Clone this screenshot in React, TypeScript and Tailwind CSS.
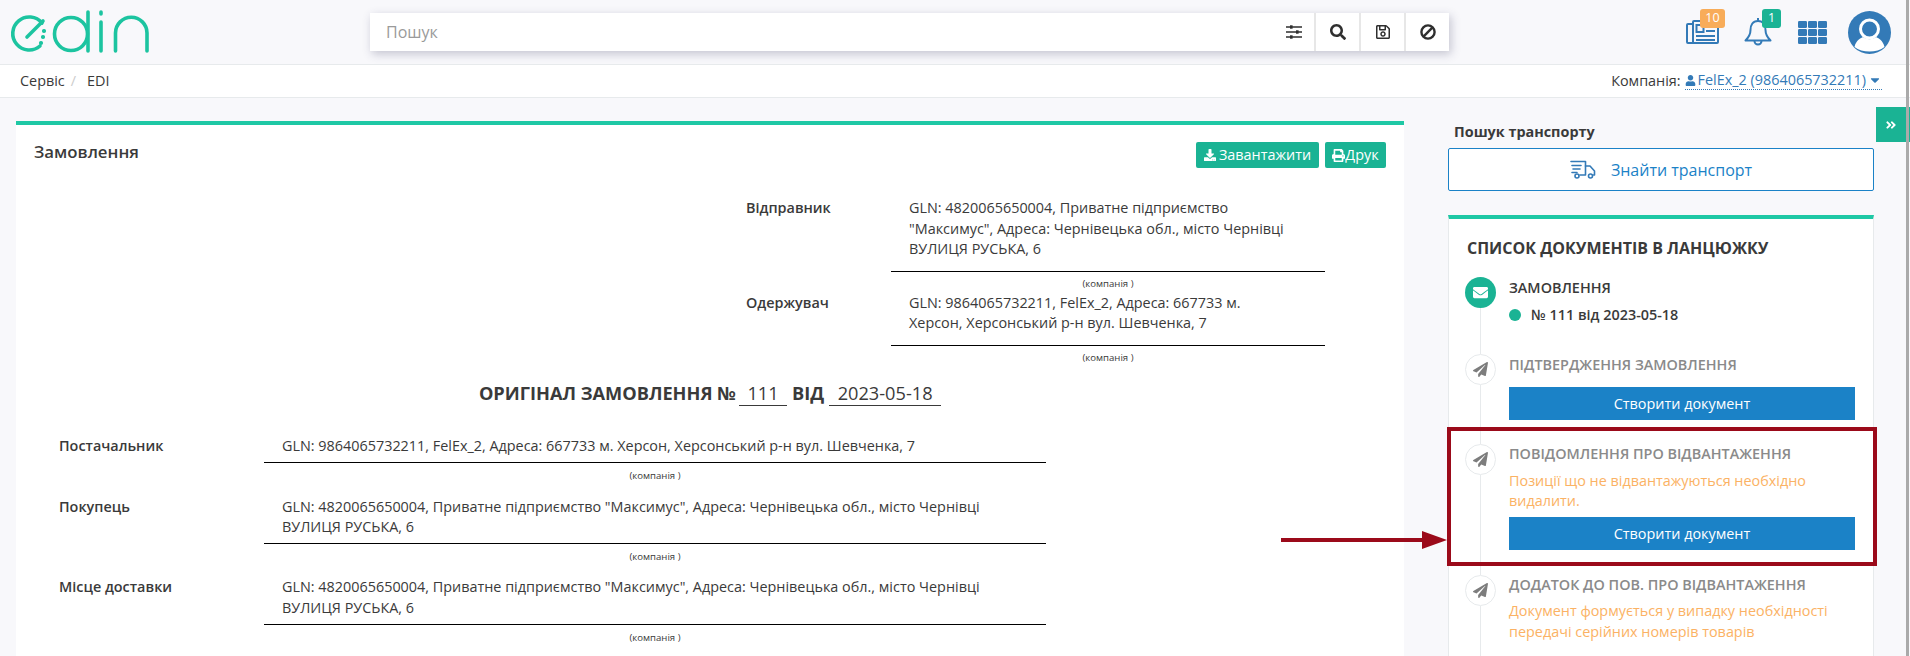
import type { ReactNode } from 'react';
import {
  FaAngleDoubleRight,
  FaCaretDown,
  FaDownload,
  FaEnvelope,
  FaPaperPlane,
  FaPrint,
  FaRegSave,
  FaSearch,
  FaUser,
} from 'react-icons/fa';

function Logo() {
  return (
    <svg width="150" height="56" viewBox="0 0 150 56" fill="none" stroke="#1cc4a0" strokeWidth="3.6" strokeLinecap="round">
      <path d="M42 23 A16.5 16.5 0 1 0 40 46" />
      <path d="M27 37 L43 21" />
      <circle cx="44" cy="31" r="1.4" fill="#1cc4a0" strokeWidth="1.4" />
      <circle cx="43" cy="37" r="1.4" fill="#1cc4a0" strokeWidth="1.4" />
      <circle cx="41" cy="43" r="1.4" fill="#1cc4a0" strokeWidth="1.4" />
      <circle cx="71" cy="34" r="16.5" />
      <path d="M88 12 V51" />
      <path d="M101 12 V14 M101 22 V51" />
      <path d="M115.5 51 V33 A15.75 15.75 0 0 1 147 33 V51" />
    </svg>
  );
}

function Avatar() {
  return (
    <svg width="43" height="43" viewBox="0 0 43 43">
      <circle cx="21.5" cy="21.5" r="21.5" fill="#337ab7" />
      <path d="M6.5 36 C8 29 13 27 15 26 C19 29 24 29 28 26 C30 27 35 29 36.5 36 C29 42 14 42 6.5 36 Z" fill="#fff" />
      <circle cx="21.5" cy="18" r="9" fill="#337ab7" stroke="#fff" strokeWidth="3" />
    </svg>
  );
}

function NewsIcon() {
  return (
    <svg width="33" height="24" viewBox="0 0 33 24" fill="none" stroke="#337ab7" strokeWidth="2">
      <path d="M7 4 H2 Q1 4 1 5 V22 Q1 23 2 23 H31 Q32 23 32 22 V2 Q32 1 31 1 H8 Q7 1 7 2 V23" />
      <rect x="10.5" y="5" width="7" height="7" />
      <path d="M20 7 H29 M20 11 H29 M10 16 H29 M10 20 H29" />
    </svg>
  );
}

function BellIcon() {
  return (
    <svg width="28" height="29" viewBox="0 0 28 29" fill="none" stroke="#337ab7" strokeWidth="2" strokeLinejoin="round">
      <path d="M14 4 C8.5 4 6.5 8.5 6.5 13 C6.5 18 4.5 20.5 1.5 23.5 H26.5 C23.5 20.5 21.5 18 21.5 13 C21.5 8.5 19.5 4 14 4 Z" />
      <path d="M14 1 V4" />
      <path d="M10.5 24 A3.5 3.5 0 0 0 17.5 24" />
    </svg>
  );
}

function GridIcon() {
  const cols = [0, 10, 20];
  const rows = [0, 8, 16];
  return (
    <svg width="29" height="23" viewBox="0 0 29 23" fill="#337ab7">
      {rows.map((y) => cols.map((x) => <rect key={`${x}-${y}`} x={x} y={y} width="9" height="7" rx="1.2" />))}
    </svg>
  );
}

function SlidersIcon() {
  return (
    <svg width="16" height="14" viewBox="0 0 16 14" fill="none" stroke="#2f2f2f" strokeWidth="1.3">
      <path d="M0 2 H16 M0 7 H16 M0 12 H16" />
      <rect x="4" y="0.3" width="2.6" height="3.4" fill="#2f2f2f" strokeWidth="0" />
      <rect x="10" y="5.3" width="2.6" height="3.4" fill="#2f2f2f" strokeWidth="0" />
      <rect x="4" y="10.3" width="2.6" height="3.4" fill="#2f2f2f" strokeWidth="0" />
    </svg>
  );
}

function BanIcon() {
  return (
    <svg width="16" height="16" viewBox="0 0 16 16" fill="none" stroke="#2f2f2f" strokeWidth="2.4">
      <circle cx="8" cy="8" r="6.6" />
      <path d="M3.4 12.6 L12.6 3.4" />
    </svg>
  );
}

function TruckIcon() {
  return (
    <svg width="26" height="19" viewBox="0 0 26 19" fill="none" stroke="#337ab7" strokeWidth="1.6" strokeLinecap="round" strokeLinejoin="round">
      <path d="M1 1.5 H15.5 V15 H10" />
      <path d="M15.5 6 H20 L24.5 11 V15 H23.5" />
      <path d="M2 5.5 H11 M3 9 H10 M2 12.5 H7" />
      <circle cx="7" cy="16" r="2" />
      <circle cx="20.5" cy="16" r="2" />
    </svg>
  );
}

function SearchButton({ children }: { children: ReactNode }) {
  return (
    <button className="flex h-full w-[45px] items-center justify-center border-l-2 border-[#e7e7e7] text-[16px] text-[#2f2f2f]">
      {children}
    </button>
  );
}

function Header() {
  return (
    <header className="flex h-[65px] items-start border-b border-[#e7eaec] bg-[#f8f8fb]">
      <div className="w-[370px]">
        <Logo />
      </div>
      <div className="mt-[13px] flex h-[38px] w-[1079px] items-center bg-white shadow-[2px_3px_9px_rgba(60,60,100,0.28)]">
        <span className="ml-[16px] flex-1 text-[16px] text-[#9a9a9a]">Пошук</span>
        <div className="flex h-full w-[40px] items-center justify-center">
          <SlidersIcon />
        </div>
        <SearchButton><FaSearch /></SearchButton>
        <SearchButton><FaRegSave /></SearchButton>
        <SearchButton><BanIcon /></SearchButton>
      </div>
      <div className="relative ml-[237px] mt-[20px] h-[24px] w-[42px]">
        <NewsIcon />
        <span className="absolute left-[14px] top-[-11px] flex h-[19px] w-[25px] items-center justify-center rounded-[3px] bg-[#f8ac59] text-[12.5px] text-white">10</span>
      </div>
      <div className="relative ml-[16px] mt-[17px]">
        <BellIcon />
        <span className="absolute left-[18px] top-[-8px] flex h-[19px] w-[19px] items-center justify-center rounded-[3px] bg-[#1ab394] text-[12.5px] text-white">1</span>
      </div>
      <div className="ml-[26px] mt-[21px]">
        <GridIcon />
      </div>
      <div className="ml-[21px] mt-[11px]">
        <Avatar />
      </div>
    </header>
  );
}

function Breadcrumbs() {
  return (
    <div className="flex h-[33px] items-center justify-between border-b border-[#e7eaec] bg-white pl-[20px] pr-[28px] text-[14.4px] text-[#3a3a3a]">
      <div className="flex items-center">
        <span>Сервіс</span>
        <span className="ml-[6px] text-[#ccc]">/</span>
        <span className="ml-[11px]">EDI</span>
      </div>
      <div className="flex items-center">
        <span>Компанія:</span>
        <span className="ml-[4px] flex items-center border-b border-dotted border-[#337ab7] leading-[18px] text-[#337ab7]">
          <FaUser className="mr-[2px] text-[11px]" />
          FelEx_2 (9864065732211)
          <FaCaretDown className="ml-[2px] text-[14px]" />
        </span>
      </div>
    </div>
  );
}

interface FieldProps {
  label: string;
  value: ReactNode;
  rowClass: string;
  labelClass: string;
  colClass: string;
  padClass: string;
  captionClass: string;
}

function Field({ label, value, rowClass, labelClass, colClass, padClass, captionClass }: FieldProps) {
  return (
    <div className={`flex text-[14.4px] leading-[20.5px] text-[#3a3a3a] ${rowClass}`}>
      <div className={`shrink-0 font-semibold ${labelClass}`}>{label}</div>
      <div className={colClass}>
        <div className={`border-b border-black pl-[18px] ${padClass}`}>{value}</div>
        <div className={`text-center text-[9.6px] leading-[12px] ${captionClass}`}>(компанія )</div>
      </div>
    </div>
  );
}

function OrderCard() {
  const topField = {
    rowClass: 'ml-[730px]',
    labelClass: 'w-[145px]',
    colClass: 'w-[434px]',
    padClass: 'pb-[11px]',
    captionClass: 'h-[21px] pt-[6px]',
  };
  const bottomField = {
    rowClass: 'ml-[43px]',
    labelClass: 'w-[205px]',
    colClass: 'w-[782px]',
    padClass: 'pb-[5.5px]',
    captionClass: 'h-[34px] pt-[7px]',
  };
  return (
    <section className="h-[535px] w-[1388px] shrink-0 border-t-4 border-[#1fc8a5] bg-white">
      <div className="flex items-start justify-between px-[18px] pt-[17px]">
        <h2 className="text-[16.8px] font-semibold leading-[20px] text-[#3a3a3a]">Замовлення</h2>
        <div className="flex gap-[6px]">
          <button className="flex h-[26px] w-[123px] items-center justify-center gap-[3px] rounded-[2px] bg-[#1ab394] text-[14.4px] text-white">
            <FaDownload className="text-[12px]" />
            Завантажити
          </button>
          <button className="flex h-[26px] w-[61px] items-center justify-center rounded-[2px] bg-[#1ab394] text-[14.4px] text-white">
            <FaPrint className="text-[13px]" />
            Друк
          </button>
        </div>
      </div>

      <div className="mt-[30px]">
        <Field
          {...topField}
          label="Відправник"
          value={<>GLN: 4820065650004, Приватне підприємство<br />"Максимус", Адреса: Чернівецька обл., місто Чернівці<br />ВУЛИЦЯ РУСЬКА, 6</>}
        />
        <Field
          {...topField}
          label="Одержувач"
          value={<>GLN: 9864065732211, FelEx_2, Адреса: 667733 м.<br />Херсон, Херсонський р-н вул. Шевченка, 7</>}
        />
      </div>

      <div className="mt-[14px] flex justify-center text-[18.2px] leading-[24px] text-[#3a3a3a]">
        <span className="font-bold">ОРИГІНАЛ ЗАМОВЛЕННЯ №</span>
        <span className="ml-[3px] w-[48px] border-b border-[#3a3a3a] text-center">111</span>
        <span className="ml-[5px] font-bold">ВІД</span>
        <span className="ml-[5px] w-[112px] border-b border-[#3a3a3a] text-center">2023-05-18</span>
      </div>

      <div className="mt-[30px]">
        <Field
          {...bottomField}
          label="Постачальник"
          value="GLN: 9864065732211, FelEx_2, Адреса: 667733 м. Херсон, Херсонський р-н вул. Шевченка, 7"
        />
        <Field
          {...bottomField}
          captionClass="h-[33px] pt-[7px]"
          label="Покупець"
          value={<>GLN: 4820065650004, Приватне підприємство "Максимус", Адреса: Чернівецька обл., місто Чернівці<br />ВУЛИЦЯ РУСЬКА, 6</>}
        />
        <Field
          {...bottomField}
          label="Місце доставки"
          value={<>GLN: 4820065650004, Приватне підприємство "Максимус", Адреса: Чернівецька обл., місто Чернівці<br />ВУЛИЦЯ РУСЬКА, 6</>}
        />
      </div>
    </section>
  );
}

function CreateButton({ className }: { className: string }) {
  return (
    <button className={`block h-[33px] w-[346px] bg-[#1b82c7] text-[14.4px] text-white ${className}`}>Створити документ</button>
  );
}

interface ChainItemProps {
  title: string;
  active?: boolean;
  className: string;
  titleClass: string;
  children: ReactNode;
}

function ChainItem({ title, active, className, titleClass, children }: ChainItemProps) {
  return (
    <div className={`flex ${className}`}>
      <div className="flex w-[31px] shrink-0 flex-col items-center">
        {active ? (
          <div className="flex h-[31px] w-[31px] shrink-0 items-center justify-center rounded-full bg-[#1ab394] text-[15px] text-white">
            <FaEnvelope />
          </div>
        ) : (
          <div className="flex h-[31px] w-[31px] shrink-0 items-center justify-center rounded-full border border-[#e7eaec] bg-white text-[15px] text-[#7d7d7d]">
            <FaPaperPlane />
          </div>
        )}
        <div className="w-px flex-1 bg-[#e7eaec]" />
      </div>
      <div className="ml-[13px] w-[346px]">
        <div className={`text-[14.4px] font-semibold leading-[20px] ${titleClass} ${active ? 'text-[#3a3a3a]' : 'text-[#8a8a8a]'}`}>{title}</div>
        {children}
      </div>
    </div>
  );
}

function SidePanel() {
  return (
    <aside className="ml-[44px] w-[426px] shrink-0">
      <h3 className="ml-[6px] pt-px text-[14.4px] font-bold leading-[20px] text-[#3a3a3a]">Пошук транспорту</h3>
      <button className="mt-[6px] flex h-[43px] w-full items-center justify-center gap-[15px] rounded-[2px] border border-[#1b82c7] bg-white text-[16px] text-[#1b82c7]">
        <TruckIcon />
        Знайти транспорт
      </button>

      <div className="mt-[24px] h-[460px] border-x border-t-4 border-x-[#e7eaec] border-t-[#1fc8a5] bg-white pl-[16px] pt-[18px]">
        <h3 className="ml-[2px] text-[16px] font-bold leading-[22px] text-[#3a3a3a]">СПИСОК ДОКУМЕНТІВ В ЛАНЦЮЖКУ</h3>
        <div className="mt-[18px]">
          <ChainItem active title="ЗАМОВЛЕННЯ" className="h-[77px]" titleClass="pt-px">
            <div className="mt-[7px] flex items-center text-[14.4px] font-semibold leading-[20px] text-[#3a3a3a]">
              <span className="h-[12px] w-[12px] rounded-full bg-[#1ab394]" />
              <span className="ml-[10px]">№ 111 від 2023-05-18</span>
            </div>
          </ChainItem>
          <ChainItem title="ПІДТВЕРДЖЕННЯ ЗАМОВЛЕННЯ" className="h-[90px]" titleClass="pt-px">
            <CreateButton className="mt-[12px]" />
          </ChainItem>
          <ChainItem title="ПОВІДОМЛЕННЯ ПРО ВІДВАНТАЖЕННЯ" className="h-[131px]" titleClass="">
            <p className="mt-[7px] text-[14.4px] leading-[20px] text-[#fbb264]">Позиції що не відвантажуються необхідно видалити.</p>
            <CreateButton className="mt-[6px]" />
          </ChainItem>
          <ChainItem title="ДОДАТОК ДО ПОВ. ПРО ВІДВАНТАЖЕННЯ" className="h-[120px]" titleClass="">
            <p className="mt-[6px] text-[14.4px] leading-[20.5px] text-[#fbb264]">Документ формується у випадку необхідності передачі серійних номерів товарів</p>
          </ChainItem>
        </div>
      </div>
    </aside>
  );
}

export default function App() {
  return (
    <div className="relative h-[656px] w-[1910px] overflow-hidden bg-[#f8f8fb] font-['Open_Sans',sans-serif]">
      <Header />
      <Breadcrumbs />
      <main className="flex pl-[16px] pt-[23px]">
        <OrderCard />
        <SidePanel />
      </main>

      {/* Кнопка згортання панелі */}
      <button className="absolute left-[1876px] top-[107px] flex h-[35px] w-[34px] items-center justify-center bg-[#1ab394] pr-[4px] text-[12px] text-white">
        <FaAngleDoubleRight />
      </button>

      {/* Смуга прокрутки біля правого краю */}
      <div className="absolute bottom-0 left-[1906px] top-0 w-[3px] bg-[#aaaaaa]" />

      {/* Анотація поверх скриншота: рамка і стрілка */}
      <div className="absolute left-[1447px] top-[427px] h-[139px] w-[430px] border-4 border-[#9b0a1a]" />
      <svg className="absolute left-[1281px] top-[528px]" width="168" height="24" viewBox="0 0 168 24">
        <path d="M0 10 H141 V3 L166 12 L141 21 V14 H0 Z" fill="#9b0a1a" />
      </svg>
    </div>
  );
}
